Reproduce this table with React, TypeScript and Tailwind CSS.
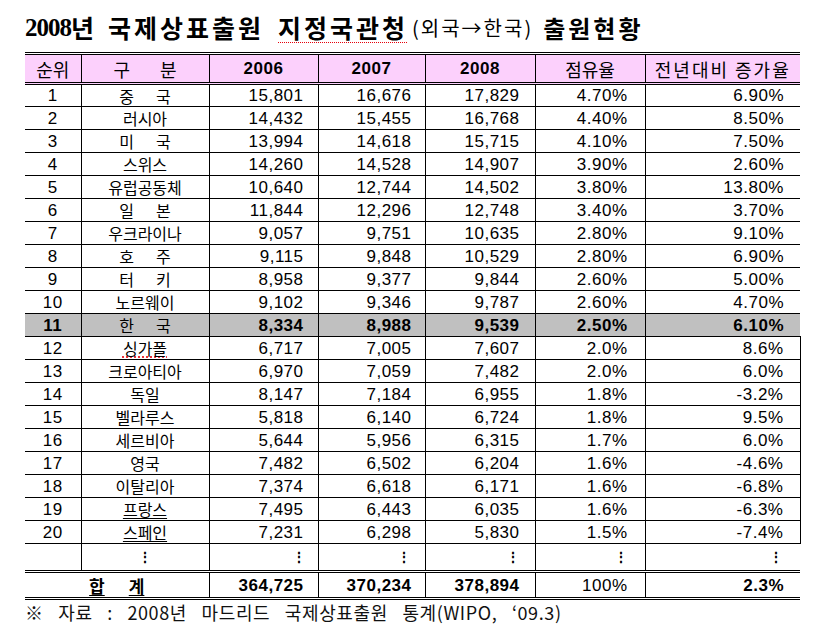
import React from "react";

type Row = {
  rank: string;
  name: string;
  wide?: boolean;
  ul?: boolean;
  squiggle?: boolean;
  y2006: string;
  y2007: string;
  y2008: string;
  share: string;
  growth: string;
};

const rows: Row[] = [
  { rank: "1", name: "중 국", wide: true, y2006: "15,801", y2007: "16,676", y2008: "17,829", share: "4.70%", growth: "6.90%" },
  { rank: "2", name: "러시아", y2006: "14,432", y2007: "15,455", y2008: "16,768", share: "4.40%", growth: "8.50%" },
  { rank: "3", name: "미 국", wide: true, y2006: "13,994", y2007: "14,618", y2008: "15,715", share: "4.10%", growth: "7.50%" },
  { rank: "4", name: "스위스", y2006: "14,260", y2007: "14,528", y2008: "14,907", share: "3.90%", growth: "2.60%" },
  { rank: "5", name: "유럽공동체", y2006: "10,640", y2007: "12,744", y2008: "14,502", share: "3.80%", growth: "13.80%" },
  { rank: "6", name: "일 본", wide: true, y2006: "11,844", y2007: "12,296", y2008: "12,748", share: "3.40%", growth: "3.70%" },
  { rank: "7", name: "우크라이나", y2006: "9,057", y2007: "9,751", y2008: "10,635", share: "2.80%", growth: "9.10%" },
  { rank: "8", name: "호 주", wide: true, y2006: "9,115", y2007: "9,848", y2008: "10,529", share: "2.80%", growth: "6.90%" },
  { rank: "9", name: "터 키", wide: true, y2006: "8,958", y2007: "9,377", y2008: "9,844", share: "2.60%", growth: "5.00%" },
  { rank: "10", name: "노르웨이", y2006: "9,102", y2007: "9,346", y2008: "9,787", share: "2.60%", growth: "4.70%" },
];

const korea: Row = { rank: "11", name: "한 국", wide: true, y2006: "8,334", y2007: "8,988", y2008: "9,539", share: "2.50%", growth: "6.10%" };

const lower: Row[] = [
  { rank: "12", name: "싱가폴", squiggle: true, y2006: "6,717", y2007: "7,005", y2008: "7,607", share: "2.0%", growth: "8.6%" },
  { rank: "13", name: "크로아티아", y2006: "6,970", y2007: "7,059", y2008: "7,482", share: "2.0%", growth: "6.0%" },
  { rank: "14", name: "독일", y2006: "8,147", y2007: "7,184", y2008: "6,955", share: "1.8%", growth: "-3.2%" },
  { rank: "15", name: "벨라루스", y2006: "5,818", y2007: "6,140", y2008: "6,724", share: "1.8%", growth: "9.5%" },
  { rank: "16", name: "세르비아", y2006: "5,644", y2007: "5,956", y2008: "6,315", share: "1.7%", growth: "6.0%" },
  { rank: "17", name: "영국", y2006: "7,482", y2007: "6,502", y2008: "6,204", share: "1.6%", growth: "-4.6%" },
  { rank: "18", name: "이탈리아", y2006: "7,374", y2007: "6,618", y2008: "6,171", share: "1.6%", growth: "-6.8%" },
  { rank: "19", name: "프랑스", ul: true, y2006: "7,495", y2007: "6,443", y2008: "6,035", share: "1.6%", growth: "-6.3%" },
  { rank: "20", name: "스페인", ul: true, y2006: "7,231", y2007: "6,298", y2008: "5,830", share: "1.5%", growth: "-7.4%" },
];

const num = "font-['Liberation_Sans','Noto_Sans_CJK_KR',sans-serif] tracking-[0.5px]";
const kr = "font-['Noto_Sans_CJK_KR',sans-serif]";

function Name({ r }: { r: Row }) {
  const parts = r.wide ? r.name.split(" ") : null;
  return (
    <td className={`border-x border-black text-center text-[16px] ${kr}`}>
      {parts ? (
        <span className="inline-flex gap-[22px]">
          <span>{parts[0]}</span>
          <span>{parts[1]}</span>
        </span>
      ) : (
        <span
          className={
            r.ul
              ? "underline underline-offset-2"
              : r.squiggle
              ? "underline decoration-dotted decoration-red-600 underline-offset-2"
              : ""
          }
        >
          {r.name}
        </span>
      )}
    </td>
  );
}

function DataRow({ r, bold, gray, right }: { r: Row; bold?: boolean; gray?: boolean; right?: boolean }) {
  const b = bold ? "font-bold" : "";
  return (
    <tr className={`h-[23px] border-t border-black leading-none ${gray ? "bg-[#c0c0c0]" : ""}`}>
      <td className={`text-center text-[17px] ${num} ${b}`}>{r.rank}</td>
      <Name r={r} />
      <td className={`border-x border-black pr-[14px] text-right text-[17px] ${num} ${b}`}>{r.y2006}</td>
      <td className={`border-x border-black pr-[13px] text-right text-[17px] ${num} ${b}`}>{r.y2007}</td>
      <td className={`border-x border-black pr-[15px] text-right text-[17px] ${num} ${b}`}>{r.y2008}</td>
      <td className={`border-x border-black pr-[17px] text-right text-[17px] ${num} ${b}`}>{r.share}</td>
      <td className={`border-l border-black pr-[16px] text-right text-[17px] ${num} ${b} ${right ? "border-r" : ""}`}>
        {r.growth}
      </td>
    </tr>
  );
}

export default function App() {
  return (
    <div className="h-[640px] w-[821px] bg-white text-black">
      <h1 className="flex h-[40px] items-end pl-[25px] leading-none">
        <span className="font-['Liberation_Serif','Noto_Sans_CJK_KR',serif] text-[25px] font-bold tracking-[-1px]">2008</span>
        <span className={`${kr} text-[25px] font-bold`}>년</span>
        <span className={`${kr} ml-[14px] text-[25px] font-bold tracking-[3px]`}>국제상표출원</span>
        <span className={`${kr} ml-[14px] text-[25px] font-bold tracking-[3px] underline decoration-dotted decoration-red-600 decoration-1 underline-offset-4`}>
          지정국관청
        </span>
        <span className={`${kr} ml-[4px] mb-[2px] text-[20px] tracking-[2px]`}>(외국→한국)</span>
        <span className={`${kr} ml-[10px] text-[24px] font-bold tracking-[3px]`}>출원현황</span>
      </h1>

      <table className="ml-[25px] mt-[12px] w-[775px] table-fixed border-collapse">
        <colgroup>
          <col className="w-[56px]" />
          <col className="w-[128px]" />
          <col className="w-[109px]" />
          <col className="w-[107px]" />
          <col className="w-[110px]" />
          <col className="w-[110px]" />
          <col className="w-[155px]" />
        </colgroup>
        <thead>
          <tr className="h-[30px] border-t-[3px] border-b-[3px] border-b-black border-double bg-[#fcd0fc] border-t-black leading-none">
            <th className={`text-center text-[18px] font-normal ${kr}`}>순위</th>
            <th className={`border-x border-black text-center text-[18px] font-normal ${kr}`}>
              <span className="inline-flex gap-[30px]">
                <span>구</span>
                <span>분</span>
              </span>
            </th>
            <th className={`border-x border-black text-center text-[17px] font-bold ${num}`}>2006</th>
            <th className={`border-x border-black text-center text-[17px] font-bold ${num}`}>2007</th>
            <th className={`border-x border-black text-center text-[17px] font-bold ${num}`}>2008</th>
            <th className={`border-x border-black text-center text-[18px] font-normal ${kr}`}>점유율</th>
            <th className={`border-l border-black text-center text-[18px] font-normal tracking-[2px] ${kr}`}>전년대비 증가율</th>
          </tr>
        </thead>
        <tbody>
          {rows.map((r) => (
            <DataRow key={r.rank} r={r} />
          ))}
          <DataRow r={korea} bold gray />
          {lower.map((r) => (
            <DataRow key={r.rank} r={r} right />
          ))}
          <tr className="h-[28px] border-t border-black leading-none">
            <td></td>
            <td className="border-x border-black text-center text-[14px] font-bold">⋮</td>
            <td className="border-x border-black pr-[12px] text-right text-[14px] font-bold">⋮</td>
            <td className="border-x border-black pr-[14px] text-right text-[14px] font-bold">⋮</td>
            <td className="border-x border-black pr-[15px] text-right text-[14px] font-bold">⋮</td>
            <td className="border-x border-black pr-[17px] text-right text-[14px] font-bold">⋮</td>
            <td className="border-l border-black pr-[17px] text-right text-[14px] font-bold">⋮</td>
          </tr>
          <tr className="h-[27px] border-t-[3px] border-double border-t-black border-b-[3px] border-b-black leading-none">
            <td colSpan={2} className={`border-r border-black text-center text-[17px] font-bold ${kr}`}>
              <span className="inline-flex gap-[24px] underline underline-offset-2">
                <span>합</span>
                <span>계</span>
              </span>
            </td>
            <td className={`border-x border-black pr-[14px] text-right text-[17px] font-bold ${num}`}>364,725</td>
            <td className={`border-x border-black pr-[13px] text-right text-[17px] font-bold ${num}`}>370,234</td>
            <td className={`border-x border-black pr-[15px] text-right text-[17px] font-bold ${num}`}>378,894</td>
            <td className={`border-x border-black pr-[17px] text-right text-[17px] ${num}`}>100%</td>
            <td className={`border-l border-black pr-[16px] text-right text-[17px] font-bold ${num}`}>2.3%</td>
          </tr>
        </tbody>
      </table>

      <p className={`ml-[25px] mt-[2px] text-[18px] leading-[20px] tracking-[0.6px] text-[#111] ${kr} [word-spacing:10px]`}>
        ※ 자료 : 2008년 마드리드 국제상표출원 통계(WIPO, ‘09.3)
      </p>
    </div>
  );
}
